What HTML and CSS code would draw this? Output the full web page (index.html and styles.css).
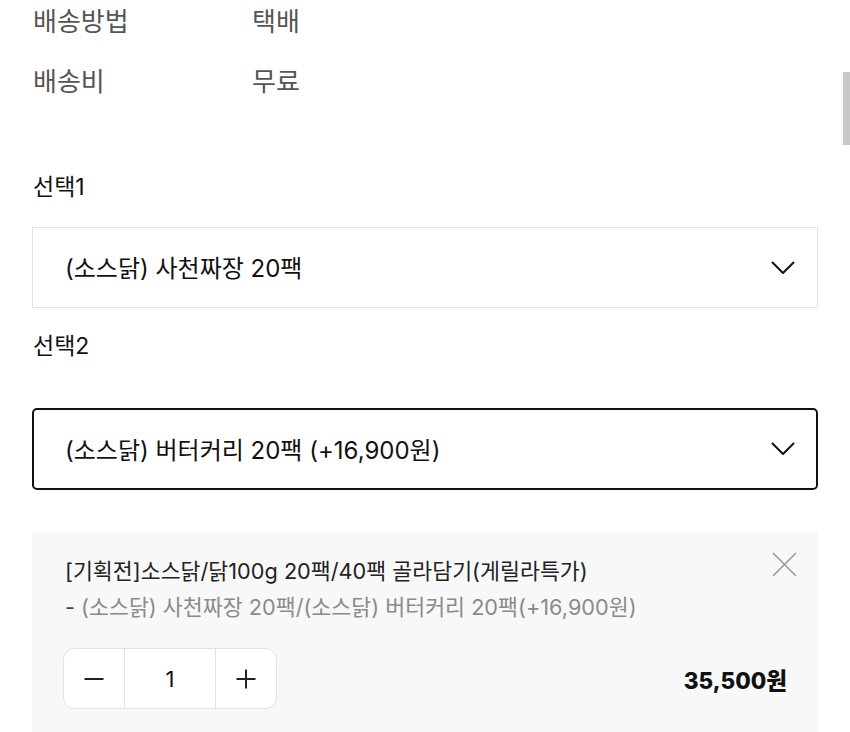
FILE: index.html
```html
<!DOCTYPE html>
<html lang="ko">
<head>
<meta charset="utf-8">
<link rel="stylesheet" href="styles.css">
</head>
<body>
<div class="page">
  <div class="info">
    <div class="info-row"><span class="info-label">배송방법</span><span class="info-value">택배</span></div>
    <div class="info-row"><span class="info-label">배송비</span><span class="info-value">무료</span></div>
  </div>

  <div class="opt-label opt-label-1">선택1</div>
  <div class="select">
    <span class="select-text">(소스닭) 사천짜장 20팩</span>
    <svg class="chev" width="24" height="14" viewBox="0 0 24 14"><polyline points="1.5,1.5 12,12 22.5,1.5" fill="none" stroke="#111" stroke-width="2" stroke-linecap="round" stroke-linejoin="round"/></svg>
  </div>

  <div class="opt-label opt-label-2">선택2</div>
  <div class="select select-active">
    <span class="select-text">(소스닭) 버터커리 20팩 (+16,900원)</span>
    <svg class="chev" width="24" height="14" viewBox="0 0 24 14"><polyline points="1.5,1.5 12,12 22.5,1.5" fill="none" stroke="#111" stroke-width="2" stroke-linecap="round" stroke-linejoin="round"/></svg>
  </div>

  <div class="picked">
    <div class="picked-head">
      <div class="picked-info">
        <div class="picked-title">[기획전]소스닭/닭100g 20팩/40팩 골라담기(게릴라특가)</div>
        <div class="picked-opt"><span class="dash">-</span> (소스닭) 사천짜장 20팩/(소스닭) 버터커리 20팩(+16,900원)</div>
      </div>
      <svg class="close" width="25" height="25" viewBox="0 0 25 25"><path d="M1 1 L24 24 M24 1 L1 24" stroke="#9a9a9a" stroke-width="1.6" fill="none"/></svg>
    </div>
    <div class="picked-foot">
      <div class="qty">
        <div class="qty-btn"><svg width="20" height="20" viewBox="0 0 20 20"><path d="M0.5 10 H19.5" stroke="#222" stroke-width="2"/></svg></div>
        <div class="qty-num">1</div>
        <div class="qty-btn qty-plus"><svg width="20" height="20" viewBox="0 0 20 20"><path d="M0.5 10 H19.5 M10 0.5 V19.5" stroke="#222" stroke-width="2"/></svg></div>
      </div>
      <div class="price">35,500원</div>
    </div>
  </div>
</div>
<div class="scroll-thumb"></div>
</body>
</html>
```

FILE: styles.css
```css
html, body {
  margin: 0;
  padding: 0;
  background: #fff;
  overflow: hidden;
}
body {
  font-family: Inter, "Noto Sans CJK KR", sans-serif;
  color: #111;
  width: 850px;
  height: 732px;
}
.page {
  padding: 0 32px;
}
.info {
  display: flex;
  flex-direction: column;
  gap: 16px;
  margin-top: -3px;
}
.info-row {
  display: flex;
  height: 44px;
  align-items: center;
  font-size: 26px;
  color: #555;
}
.info-label {
  width: 219px;
  padding-left: 1px;
}
.opt-label {
  font-size: 23px;
  line-height: 30px;
  color: #111;
  padding-left: 1px;
}
.opt-label-1 {
  margin-top: 71px;
  margin-bottom: 25px;
}
.opt-label-2 {
  margin-top: 23px;
  margin-bottom: 47px;
}
.select {
  box-sizing: border-box;
  height: 81px;
  border: 1px solid #e2e2e2;
  display: flex;
  align-items: center;
  justify-content: space-between;
  padding: 0 22px 0 32px;
}
.select-active {
  height: 82px;
  border: 2.5px solid #111;
  border-radius: 5px;
  padding: 0 21px 0 31px;
}
.select-text {
  font-size: 24px;
  color: #111;
  margin-top: -2px;
}
.chev {
  display: block;
}
.picked {
  margin-top: 42px;
  background: #f8f8f8;
  height: 210px;
  padding: 20px 21px 0 33px;
}
.picked-head {
  display: flex;
  justify-content: space-between;
  align-items: flex-start;
}
.picked-title {
  font-size: 21.7px;
  line-height: 36px;
  color: #222;
  margin-top: 1px;
}
.picked-opt {
  font-size: 21.7px;
  line-height: 36px;
  color: #8a8a8a;
}
.dash {
  color: #444;
}
.close {
  display: block;
  flex-shrink: 0;
}
.picked-foot {
  display: flex;
  justify-content: space-between;
  align-items: center;
  margin-top: 23px;
  padding-right: 10px;
  margin-left: -2px;
}
.qty {
  display: flex;
  height: 61px;
  box-sizing: border-box;
  border: 1px solid #e3e3e3;
  border-radius: 11px;
  background: #fff;
  overflow: hidden;
}
.qty-btn {
  width: 60px;
  display: flex;
  align-items: center;
  justify-content: center;
}
.qty-num {
  width: 90px;
  border-left: 1px solid #e3e3e3;
  border-right: 1px solid #e3e3e3;
  display: flex;
  align-items: center;
  justify-content: center;
  font-size: 22px;
  color: #111;
}
.price {
  font-size: 22.5px;
  font-weight: 800;
  color: #111;
}
.scroll-thumb {
  position: absolute;
  left: 843px;
  top: 72px;
  width: 7px;
  height: 73px;
  background: #c8c8c8;
}
```
